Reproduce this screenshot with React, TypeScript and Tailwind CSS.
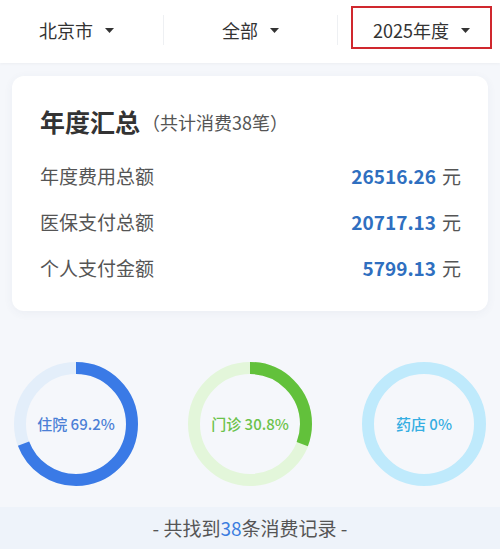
import React from "react";

const font = { fontFamily: '"Noto Sans CJK SC", "Noto Sans", sans-serif' };

function Caret() {
  return (
    <svg width="9" height="5" viewBox="0 0 9 5" className="ml-[12px]">
      <path d="M0 0 H9 L4.5 5 Z" fill="#333" />
    </svg>
  );
}

function Ring({
  pct,
  color,
  track,
  label,
  text,
}: {
  pct: number;
  color: string;
  track: string;
  label: string;
  text: string;
}) {
  const r = 56;
  const c = 2 * Math.PI * r;
  return (
    <div className="relative w-[124px] h-[124px]">
      <svg width="124" height="124" viewBox="0 0 124 124">
        <circle cx="62" cy="62" r={r} fill="none" stroke={track} strokeWidth="12" />
        {pct > 0 && (
          <circle
            cx="62"
            cy="62"
            r={r}
            fill="none"
            stroke={color}
            strokeWidth="12"
            strokeDasharray={`${(c * pct) / 100} ${c}`}
            transform="rotate(-90 62 62)"
          />
        )}
      </svg>
      <div
        className="absolute inset-0 flex items-center justify-center text-[15px] font-medium"
        style={{ color: text }}
      >
        {label}
      </div>
    </div>
  );
}

export default function App() {
  const rows = [
    { name: "年度费用总额", value: "26516.26" },
    { name: "医保支付总额", value: "20717.13" },
    { name: "个人支付金额", value: "5799.13" },
  ];

  return (
    <div className="w-[500px] h-[549px] bg-[#f5f7fb] flex flex-col overflow-hidden" style={font}>
      {/* filter bar */}
      <div className="h-[63px] pb-[3px] bg-white flex items-center shadow-[0_1px_3px_rgba(0,0,0,0.04)] text-[18px] text-[#333]">
        <div className="w-[163px] flex items-center justify-center pr-[10px]">
          北京市
          <Caret />
        </div>
        <div className="w-px h-[30px] bg-[#eef0f3]" />
        <div className="w-[173px] flex items-center justify-center">
          全部
          <Caret />
        </div>
        <div className="w-px h-[30px] bg-[#eef0f3]" />
        <div className="flex-1 flex items-center">
          <div className="ml-[13px] mb-[5px] w-[141px] h-[43px] border-2 border-[#d0282e] flex items-center justify-center pt-[5px]">
            2025年度
            <Caret />
          </div>
        </div>
      </div>

      {/* summary card */}
      <div className="mx-[12px] mt-[13px] bg-white rounded-[12px] shadow-[0_2px_10px_rgba(60,80,120,0.06)] pt-[31px] pb-[20px] pl-[28px] pr-[27px]">
        <div className="h-[30px] flex items-center">
          <span className="text-[25px] font-bold text-[#333]">年度汇总</span>
          <span className="ml-[2px] text-[18px] text-[#555]">（共计消费38笔）</span>
        </div>
        <div className="mt-[16px]">
          {rows.map((r) => (
            <div key={r.name} className="h-[46px] flex items-center justify-between">
              <span className="text-[19px] text-[#555]">{r.name}</span>
              <span className="text-[19px] text-[#555]">
                <span className="text-[19px] font-semibold text-[#2f6fc0]">{r.value}</span>
                <span className="ml-[6px]">元</span>
              </span>
            </div>
          ))}
        </div>
      </div>

      {/* rings */}
      <div className="flex justify-between px-[14px] pt-[51px]">
        <Ring pct={69.2} color="#3a7ae6" track="#e3eefa" label="住院 69.2%" text="#4b7fd6" />
        <Ring pct={30.8} color="#62c13b" track="#e3f6da" label="门诊 30.8%" text="#6bc24a" />
        <Ring pct={0} color="#3fb4e6" track="#bfeafc" label="药店 0%" text="#35aee2" />
      </div>

      {/* footer */}
      <div className="mt-auto h-[42px] bg-[#eef3fa] flex items-center justify-center text-[19px] text-[#555]">
        - 共找到<span className="text-[#3b7de0]">38</span>条消费记录 -
      </div>
    </div>
  );
}
